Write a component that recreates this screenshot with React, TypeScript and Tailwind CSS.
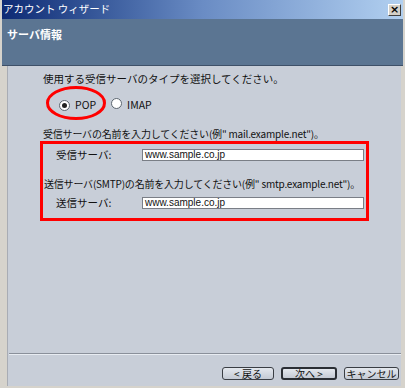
import React from "react";

const jp = { fontFamily: '"Noto Sans CJK JP", "Liberation Sans", sans-serif' };

function Radio({ checked }: { checked?: boolean }) {
  return (
    <span className="relative inline-flex h-[11px] w-[11px] items-center justify-center rounded-full border border-[#5c6670] bg-white">
      {checked && <span className="h-[5px] w-[5px] rounded-full bg-[#222]" />}
    </span>
  );
}

function Btn({ label, primary }: { label: string; primary?: boolean }) {
  return (
    <div
      className={
        "flex h-[13px] items-center justify-center rounded-[3px] bg-gradient-to-b from-[#e4e8ee] to-[#c4cad4] text-[10px] leading-none text-[#111] " +
        (primary ? "border-2 border-[#2a2e34]" : "border border-[#3a3e44]")
      }
      style={jp}
    >
      {label}
    </div>
  );
}

export default function App() {
  return (
    <div className="flex h-[388px] w-[405px] flex-col overflow-hidden bg-[#d6d3cc] pl-[2px] pr-[2px]" style={jp}>
      {/* title bar */}
      <div className="flex h-[19px] shrink-0 items-center justify-between bg-gradient-to-r from-[#0e2a74] via-[#6a8cc4] to-[#b2d0f0] pl-[1px] pr-[2px]">
        <span className="text-[10.5px] leading-none text-white">アカウント ウィザード</span>
        <div className="flex h-[12px] w-[13px] items-center justify-center border border-t-white border-l-white border-r-[#404040] border-b-[#404040] bg-[#d4d0c8] text-[11px] font-bold leading-none text-black" style={{ fontFamily: '"DejaVu Sans", sans-serif' }}>
          ×
        </div>
      </div>
      {/* header */}
      <div className="h-[47px] shrink-0 border-b border-[#3e5068] bg-[#5b7592] pl-[5px] pt-[8px] text-[11px] font-bold leading-[14px] text-white">
        サーバ情報
      </div>
      {/* content */}
      <div className="relative ml-[5px] mr-[2px] flex flex-1 flex-col border-l border-[#a8acb4] bg-[#c8ced8] text-[10.5px] text-[#111]">
        <div className="ml-[35px] mt-[6px] whitespace-nowrap leading-[14px]">使用する受信サーバのタイプを選択してください。</div>
        <div className="ml-[51px] mt-[12px] flex items-center gap-[5px] leading-[14px]">
          <Radio checked />
          <span className="text-[10.5px]">POP</span>
          <span className="ml-[10px]"><Radio /></span>
          <span>IMAP</span>
        </div>
        <div className="ml-[35px] mt-[15px] whitespace-nowrap text-[10px] leading-[14px] tracking-[-0.2px]">受信サーバの名前を入力してください(例" mail.example.net")。</div>
        <div className="ml-[32px] mt-[0px] flex h-[80px] w-[329px] flex-col border-[3px] border-[#ff0000] pl-[1px]">
          <div className="mt-[5px] flex h-[12px] items-center">
            <span className="ml-[12px] w-[86px] leading-none">受信サーバ:</span>
            <div className="flex h-[12px] w-[222px] items-center border border-[#7a7e86] bg-white pl-[2px] text-[10px] leading-none" style={{ fontFamily: '"Liberation Sans", sans-serif' }}>
              www.sample.co.jp
            </div>
          </div>
          <div className="mt-[16px] whitespace-nowrap text-[10px] leading-[14px] tracking-[-0.2px]">送信サーバ(SMTP)の名前を入力してください(例" smtp.example.net")。</div>
          <div className="mt-[6px] flex h-[12px] items-center">
            <span className="ml-[12px] w-[86px] leading-none">送信サーバ:</span>
            <div className="flex h-[12px] w-[222px] items-center border border-[#7a7e86] bg-white pl-[2px] text-[10px] leading-none" style={{ fontFamily: '"Liberation Sans", sans-serif' }}>
              www.sample.co.jp
            </div>
          </div>
        </div>
        <div className="flex-1" />
        <div className="ml-[1px] h-[2px] border-t border-b border-t-[#8a909a] border-b-[#e8ecf2]" />
        <div className="mb-[6px] mt-[12px] flex justify-end gap-[7px] pr-[2px]">
          <div className="w-[52px]"><Btn label="< 戻る" /></div>
          <div className="w-[56px]"><Btn label="次へ >" primary /></div>
          <div className="w-[55px]"><Btn label="キャンセル" /></div>
        </div>
        <svg className="pointer-events-none absolute left-[37px] top-[19px]" width="62" height="36" viewBox="0 0 62 36">
          <ellipse cx="31" cy="18" rx="28.5" ry="15.5" fill="none" stroke="#ff0000" strokeWidth="3" />
        </svg>
      </div>
      <div className="h-[2px] shrink-0" />
    </div>
  );
}
